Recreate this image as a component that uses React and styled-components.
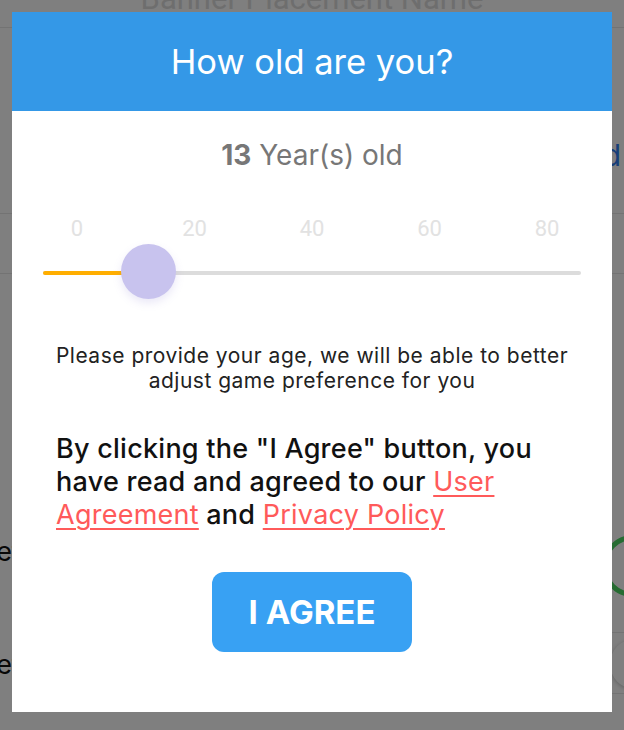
import React from "react";
import styled, { createGlobalStyle } from "styled-components";

const GlobalStyle = createGlobalStyle`
  html, body { margin: 0; padding: 0; background: #ffffff; }
  body { font-family: Inter, "Noto Sans", sans-serif; -webkit-font-smoothing: antialiased; }
  * { box-sizing: border-box; }
`;

/* ---------- page behind the dialog ---------- */
const Page = styled.div`
  width: 624px;
  height: 730px;
  overflow: hidden;
  background: #ffffff;
  display: flex;
  flex-direction: column;
`;

const PageHeader = styled.div`
  height: 28px;
  border-bottom: 1px solid #e6e6e6;
  display: flex;
  justify-content: center;
  align-items: flex-end;
  overflow: hidden;
  flex-shrink: 0;
`;

const PageTitle = styled.span`
  font-family: Roboto, sans-serif;
  font-size: 31px;
  line-height: 31px;
  color: #dcdcdc;
  margin-bottom: 13px;
`;

const Block = styled.div`
  height: ${(p) => p.$h}px;
  flex-shrink: 0;
  border-bottom: ${(p) => (p.$line ? "1px solid #e6e6e6" : "none")};
  display: flex;
  justify-content: flex-end;
  align-items: flex-start;
  padding-top: ${(p) => p.$pt || 0}px;
`;

const LinkText = styled.span`
  font-size: 30px;
  line-height: 34px;
  color: #2f7df0;
  margin-right: 3px;
`;

const ItemRow = styled.div`
  height: ${(p) => p.$h}px;
  flex-shrink: 0;
  display: flex;
  justify-content: space-between;
  align-items: flex-start;
  padding-top: ${(p) => p.$pt}px;
  position: relative;
`;

const InsetLine = styled.div`
  position: absolute;
  left: 320px;
  right: 0;
  bottom: 0;
  border-bottom: 1px solid #e6e6e6;
`;

const ItemLabel = styled.span`
  font-size: 27px;
  line-height: 34px;
  color: #111;
  margin-left: -21px;
`;

const Ring = styled.div`
  width: 62px;
  height: 62px;
  border-radius: 50%;
  border: 5px solid #4cd964;
  margin-right: -40px;
`;

const Knob = styled.div`
  width: 50px;
  height: 50px;
  border-radius: 50%;
  background: #fff;
  box-shadow: 0 1px 4px rgba(0, 0, 0, 0.25);
  margin-right: -36px;
  margin-top: -9px;
`;

/* ---------- dialog ---------- */
const Backdrop = styled.div`
  position: fixed;
  inset: 0;
  background: rgba(0, 0, 0, 0.5);
  display: flex;
  justify-content: center;
  align-items: flex-start;
  padding-top: 12px;
`;

const Dialog = styled.div`
  width: 600px;
  height: 700px;
  background: #ffffff;
  display: flex;
  flex-direction: column;
`;

const DialogHeader = styled.div`
  height: 99px;
  background: #3498e7;
  display: flex;
  align-items: center;
  justify-content: center;
  flex-shrink: 0;
`;

const DialogTitle = styled.h1`
  margin: 0;
  font-family: Inter, sans-serif;
  font-weight: 400;
  font-size: 34.5px;
  color: #ffffff;
`;

const DialogBody = styled.div`
  display: flex;
  flex-direction: column;
  align-items: stretch;
  padding: 0 31px 0 31px;
`;

const AgeLine = styled.div`
  margin-top: 27px;
  text-align: center;
  font-size: 28px;
  line-height: 34px;
  color: #777777;
`;

const AgeNumber = styled.b`
  font-weight: 700;
`;

const TickRow = styled.div`
  margin-top: 45px;
  display: flex;
  justify-content: space-between;
  padding: 0 14px;
`;

const Tick = styled.span`
  width: 40px;
  text-align: center;
  font-family: Roboto, sans-serif;
  font-size: 22px;
  line-height: 24px;
  color: #e2e2e2;
`;

const SliderRow = styled.div`
  margin-top: 4px;
  height: 55px;
  display: flex;
  align-items: center;
`;

const Track = styled.div`
  flex: 1;
  height: 4px;
  border-radius: 2px;
  background: #dcdcdc;
  display: flex;
  align-items: center;
`;

const Fill = styled.div`
  height: 4px;
  border-radius: 2px 0 0 2px;
  background: #ffae00;
  flex-shrink: 0;
`;

const Thumb = styled.div`
  width: 55px;
  height: 55px;
  border-radius: 50%;
  background: #c8c3ee;
  box-shadow: 0 4px 8px rgba(140, 130, 210, 0.18);
  margin-left: -27px;
  margin-top: -2px;
  flex-shrink: 0;
`;

const Hint = styled.p`
  margin: 43px 0 0 0;
  text-align: center;
  font-size: 21px;
  line-height: 25px;
  letter-spacing: 0.5px;
  color: #222222;
`;

const Consent = styled.p`
  margin: 39px 0 0 13px;
  width: 500px;
  font-size: 27px;
  line-height: 33px;
  letter-spacing: 0.25px;
  color: #111111;
  font-weight: 500;
`;

const PolicyLink = styled.a`
  color: #ff5a5a;
  font-weight: 400;
  text-decoration: underline;
  text-decoration-thickness: 1.5px;
  text-underline-offset: 4px;
`;

const AgreeButton = styled.button`
  align-self: center;
  margin-top: 41px;
  width: 200px;
  height: 80px;
  border: none;
  border-radius: 12px;
  background: #38a1f3;
  color: #ffffff;
  font-family: Inter, sans-serif;
  font-weight: 700;
  font-size: 33px;
  cursor: pointer;
`;

const ticks = [0, 20, 40, 60, 80];
const age = 13;
const fillWidth = 105;

export default function App() {
  return (
    <>
      <GlobalStyle />
      <Page>
        <PageHeader>
          <PageTitle>Banner Placement Name</PageTitle>
        </PageHeader>
        <Block $h={186} $line $pt={110}>
          <LinkText>Add</LinkText>
        </Block>
        <Block $h={60} $line />
        <Block $h={246} />
        <ItemRow $h={113} $pt={15}>
          <ItemLabel>Set</ItemLabel>
          <Ring />
          <InsetLine />
        </ItemRow>
        <ItemRow $h={61} $pt={15}>
          <ItemLabel>Set</ItemLabel>
          <Knob />
          <InsetLine />
        </ItemRow>
      </Page>
      <Backdrop>
        <Dialog role="dialog">
          <DialogHeader>
            <DialogTitle>How old are you?</DialogTitle>
          </DialogHeader>
          <DialogBody>
            <AgeLine>
              <AgeNumber>{age}</AgeNumber> Year(s) old
            </AgeLine>
            <TickRow>
              {ticks.map((t) => (
                <Tick key={t}>{t}</Tick>
              ))}
            </TickRow>
            <SliderRow>
              <Track>
                <Fill style={{ width: `${fillWidth}px` }} />
                <Thumb />
              </Track>
            </SliderRow>
            <Hint>
              Please provide your age, we will be able to better
              <br />
              adjust game preference for you
            </Hint>
            <Consent>
              By clicking the "I Agree" button, you have read and agreed to our{" "}
              <PolicyLink>User Agreement</PolicyLink> and{" "}
              <PolicyLink>Privacy Policy</PolicyLink>
            </Consent>
            <AgreeButton>I AGREE</AgreeButton>
          </DialogBody>
        </Dialog>
      </Backdrop>
    </>
  );
}
